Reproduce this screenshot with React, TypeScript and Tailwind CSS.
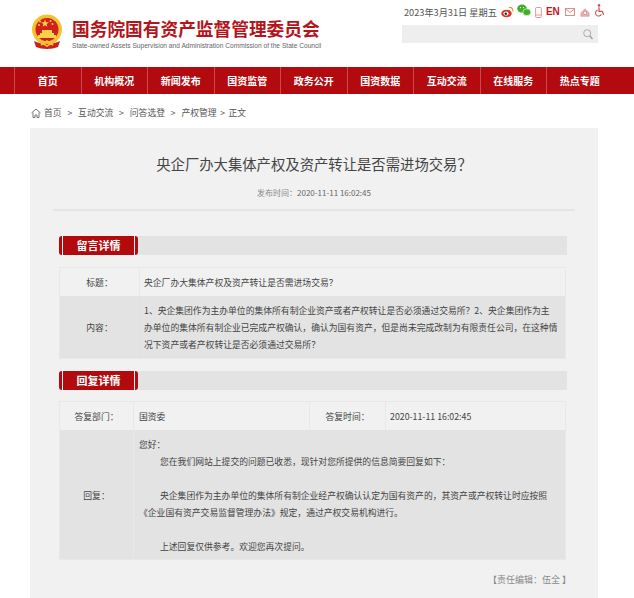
import React from "react";

const font = { fontFamily: '"Noto Sans CJK SC","Noto Sans",sans-serif' };

function Emblem() {
  return (
    <svg width="32" height="36" viewBox="0 0 32 36">
      <circle cx="16" cy="15.5" r="15" fill="#f2c230" />
      <circle cx="16" cy="15.5" r="11.5" fill="#d3201c" />
      <polygon points="14,5.5 15,8.3 18,8.3 15.6,10 16.4,12.8 14,11.2 11.6,12.8 12.4,10 10,8.3 13,8.3" fill="#f6d34a" />
      <circle cx="19.5" cy="7" r="1" fill="#f6d34a" />
      <circle cx="21.5" cy="10" r="1" fill="#f6d34a" />
      <circle cx="9" cy="7.5" r="1" fill="#f6d34a" />
      <circle cx="8" cy="11" r="1" fill="#f6d34a" />
      <path d="M9 19h14v2H9zM11 16h10v3H11zM7 21h18v3H7z" fill="#f6d34a" />
      <path d="M3 27c4 2 8 3 13 3s9-1 13-3l-2 6c-3 1-7 2-11 2s-8-1-11-2z" fill="#c9201c" />
      <path d="M6 26l10 6 10-6M10 31l6-4 6 4" stroke="#f2c230" strokeWidth="1.6" fill="none" />
    </svg>
  );
}

function TopIcons() {
  return (
    <div className="flex items-center">
      <svg width="13" height="12" viewBox="0 0 13 12" className="ml-[4px]">
        <ellipse cx="5.5" cy="7.5" rx="5.2" ry="3.8" fill="#d5352a" />
        <ellipse cx="5" cy="7.6" rx="2.6" ry="2.1" fill="#fff" />
        <circle cx="4.8" cy="7.8" r="1.2" fill="#222" />
        <path d="M8 1.5c2.5-.6 4.4 1.500 3.800 4" stroke="#e9982c" strokeWidth="1.200" fill="none" />
      </svg>
      <svg width="14" height="13" viewBox="0 0 14 13" className="ml-[3px] -mt-[3px]">
        <ellipse cx="5" cy="4.600" rx="4.800" ry="4" fill="#3fae2a" />
        <ellipse cx="9.800" cy="8.200" rx="4" ry="3.400" fill="#3fae2a" stroke="#fff" strokeWidth="0.600" />
        <circle cx="3.500" cy="3.600" r="0.700" fill="#fff" />
        <circle cx="6.500" cy="3.600" r="0.700" fill="#fff" />
      </svg>
      <svg width="7" height="11" viewBox="0 0 8 13" className="ml-[4px]">
        <rect x="0.600" y="0.600" width="6.800" height="11.800" rx="1" fill="none" stroke="#d9878a" strokeWidth="1" />
        <path d="M1 9.500h6" stroke="#d9878a" />
      </svg>
      <span className="ml-[4px] text-[10px] leading-none font-bold text-[#c8161d]" style={{ fontFamily: '"Liberation Sans",sans-serif' }}>EN</span>
      <svg width="10" height="8" viewBox="0 0 11 9" className="ml-[5px]">
        <rect x="0.500" y="0.500" width="10" height="8" fill="none" stroke="#dd7f80" />
        <path d="M1 1.500l4.500 3.500 4.500-3.500" fill="none" stroke="#dd7f80" />
      </svg>
      <svg width="10" height="9" viewBox="0 0 12 11" className="ml-[5px]">
        <path d="M1 6l5-5 5 5v4H1z" fill="#e9b4b4" stroke="#d88" strokeWidth="0.800" />
        <circle cx="6" cy="6" r="2" fill="#fff" stroke="#d88" />
      </svg>
      <svg width="11" height="13" viewBox="0 0 11 14" className="ml-[4px] -mt-[3px]">
        <circle cx="5" cy="1.500" r="1.400" fill="#c9504f" />
        <path d="M5 3.500v4.500h3.500l1.500 3.500" fill="none" stroke="#c9504f" strokeWidth="1.300" />
        <path d="M3.500 6.500a3.300 3.300 0 1 0 4 4.500" fill="none" stroke="#c9504f" strokeWidth="1.100" />
      </svg>
    </div>
  );
}

function SectionBar({ title }: { title: string }) {
  return (
    <div className="h-[19px] bg-[#e3e3e3] flex items-stretch">
      <div className="flex items-stretch">
        <span className="w-[3px] bg-[#b30a0d] rounded-l-sm" />
        <span className="w-[1px] bg-[#f2f2f2]" />
        <span className="w-[71px] bg-[#b30a0d] text-white text-[11px] font-bold flex items-center justify-center">{title}</span>
        <span className="w-[1px] bg-[#f2f2f2]" />
        <span className="w-[3px] bg-[#b30a0d] rounded-r-sm" />
      </div>
    </div>
  );
}

const nav = ["首页", "机构概况", "新闻发布", "国资监管", "政务公开", "国资数据", "互动交流", "在线服务", "热点专题"];
const crumbs = ["互动交流", "问答选登", "产权管理"];

export default function App() {
  return (
    <div className="w-[634px] h-[598px] overflow-hidden bg-white text-[#444]" style={font}>
      <header className="h-[67px] flex justify-between">
        <div className="flex pl-[31px] pt-[14px]">
          <Emblem />
          <div className="ml-[9px]">
            <div className="text-[17.700px] leading-[26px] font-bold text-[#b5141a] pt-[1px] whitespace-nowrap">国务院国有资产监督管理委员会</div>
            <div className="text-[6.640px] leading-[9px] text-[#666] whitespace-nowrap" style={{ fontFamily: '"Liberation Sans",sans-serif' }}>State-owned Assets Supervision and Administration Commission of the State Council</div>
          </div>
        </div>
        <div className="w-[232px] pt-[5px]">
          <div className="flex items-center h-[14px] pl-[2px]">
            <span className="text-[9.200px] leading-none text-[#555] whitespace-nowrap pt-[1px]">2023年3月31日 星期五</span>
            <TopIcons />
          </div>
          <div className="mt-[6px] w-[196px] h-[18px] bg-[#eeeeee] flex items-center justify-end pr-[5px]">
            <svg width="10" height="11" viewBox="0 0 10 11">
              <circle cx="4.200" cy="4.200" r="3.500" fill="none" stroke="#aaa" strokeWidth="1" />
              <path d="M6.800 7l2.700 3" stroke="#999" strokeWidth="1.300" />
            </svg>
          </div>
        </div>
      </header>

      <nav className="h-[27px] bg-[#b20a0e] flex pl-[14px]">
        {nav.map((n) => (
          <div key={n} className="w-[66.500px] border-l border-[#c9494c] flex items-center justify-center text-white text-[10px] font-bold">{n}</div>
        ))}
      </nav>

      <div className="h-[34px] pl-[31px] flex items-center text-[8.800px] text-[#555] whitespace-nowrap pt-[4px]">
        <svg width="10" height="10" viewBox="0 0 10 10" className="mr-[3px]">
          <path d="M.5 5L5 1l4.500 4M2 4.500V9.500h2V7h2v2.500h2V4.500" fill="none" stroke="#777" strokeWidth="1" />
        </svg>
        <span>首页</span>
        {crumbs.map((c) => (
          <React.Fragment key={c}>
            <span className="mx-[5.800px]">&gt;</span>
            <span>{c}</span>
          </React.Fragment>
        ))}
        <span className="mx-[3.500px]">&gt;</span>
        <span>正文</span>
      </div>

      <main className="ml-[30px] w-[568px] h-[470px] bg-[#f1f1f1] pl-[29px] pr-[31px]">
        <h1 className="pt-[26px] pl-[2px] text-[14.350px] leading-[20px] text-center text-[#444]">央企厂办大集体产权及资产转让是否需进场交易？</h1>
        <div className="mt-[13px] -ml-[6px] -mr-[8px] h-[24px] text-center text-[8px] leading-[12px] text-[#888] border-b-2 border-[#e4e4e4]">
          发布时间：<span className="text-[#666]">2020-11-11 16:02:45</span>
        </div>

        <div className="mt-[25px]"><SectionBar title="留言详情" /></div>
        <div className="mt-[12px] w-[507px] border border-[#e8e8e8] text-[8.800px] text-[#444]">
          <div className="flex h-[28px] items-center">
            <div className="w-[80px] h-full border-r border-[#e8e8e8] flex items-center justify-center pt-[1px]">标题：</div>
            <div className="pl-[4px] pt-[1px]">央企厂办大集体产权及资产转让是否需进场交易？</div>
          </div>
          <div className="flex h-[62px] bg-[#e3e3e3]">
            <div className="w-[80px] border-r border-[#e0e0e0] flex items-center justify-center pt-[2px]">内容：</div>
            <div className="flex-1 pl-[4px] pr-[3px] leading-[17px] pt-[6px]">
              1、央企集团作为主办单位的集体所有制企业资产或者产权转让是否必须通过交易所？2、央企集团作为主<br />
              办单位的集体所有制企业已完成产权确认，确认为国有资产，但是尚未完成改制为有限责任公司，在这种情<br />
              况下资产或者产权转让是否必须通过交易所？
            </div>
          </div>
        </div>

        <div className="mt-[12px]"><SectionBar title="回复详情" /></div>
        <div className="mt-[11px] w-[507px] border border-[#e8e8e8] text-[8.800px] text-[#444]">
          <div className="flex h-[28px] items-center">
            <div className="w-[74px] h-full flex items-center justify-center border-r border-[#e8e8e8] pt-[1px]">答复部门：</div>
            <div className="w-[176px] h-full flex items-center pl-[5px] border-r border-[#e8e8e8] pt-[1px]">国资委</div>
            <div className="w-[76px] h-full flex items-center justify-center border-r border-[#e8e8e8] pt-[1px]">答复时间：</div>
            <div className="pl-[4px] pt-[1px]">2020-11-11 16:02:45</div>
          </div>
          <div className="flex h-[129px] bg-[#e3e3e3]">
            <div className="w-[74px] border-r border-[#e8e8e8] flex items-center justify-center pt-[2px]">回复：</div>
            <div className="flex-1 pl-[5px] pr-[3px] pt-[6px] leading-[17px]">
              <p>您好：</p>
              <p className="indent-[21px]">您在我们网站上提交的问题已收悉，现针对您所提供的信息简要回复如下：</p>
              <p>&nbsp;</p>
              <p className="indent-[21px]">央企集团作为主办单位的集体所有制企业经产权确认认定为国有资产的，其资产或产权转让时应按照<br />《企业国有资产交易监督管理办法》规定，通过产权交易机构进行。</p>
              <p>&nbsp;</p>
              <p className="indent-[21px]">上述回复仅供参考。欢迎您再次提问。</p>
            </div>
          </div>
        </div>
        <div className="mt-[14px] w-[512px] text-right text-[9px] leading-[12px] text-[#888]">【责任编辑：伍全 】</div>
      </main>
    </div>
  );
}
